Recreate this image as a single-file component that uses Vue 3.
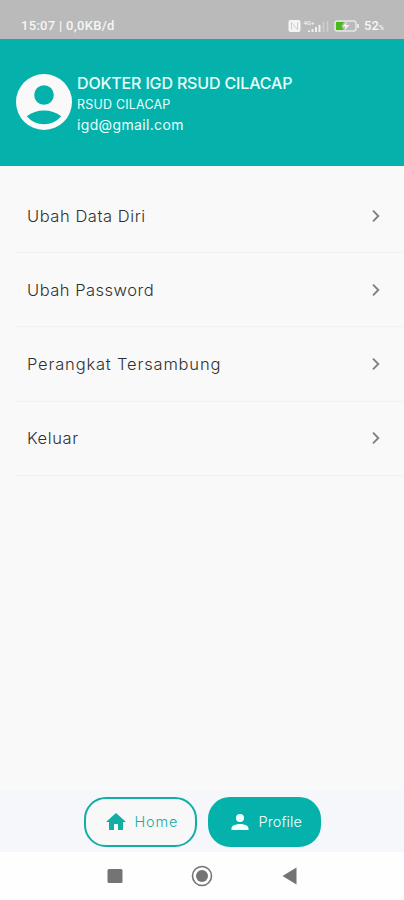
<template>
  <div class="screen">
    <div class="status-bar">
      <span class="status-time">15:07 | 0,0KB/d</span>
      <div class="status-icons">
        <svg width="42" height="14" viewBox="0 0 42 14">
          <rect x="0.5" y="1" width="12" height="12" rx="2" fill="#f4f4f4" />
          <path d="M3.5 10.5v-7l6 7v-7" fill="none" stroke="#cfcfcf" stroke-width="1" />
          <text x="15.5" y="6" class="network">4G+</text>
          <path d="M21 13v-1.5M24.5 13v-3M28 13V8M31.5 13V6" stroke="#f0f0f0" stroke-width="2" />
          <path d="M35.5 13V3M39.5 13V2" stroke="#d0d0d0" stroke-width="1.5" />
        </svg>
        <svg class="battery" width="26" height="12" viewBox="0 0 26 12">
          <rect x="1" y="1" width="21" height="10" rx="2.5" fill="none" stroke="#e6e6e6" stroke-width="1.5" />
          <path d="M2 2h8L7.5 6l2 4H2z" fill="#48b91b" />
          <path d="M13 1.5L8.5 6.5h3l-1 4 5-5.5H12z" fill="#f4f4f4" />
          <path d="M24 4v4" stroke="#e6e6e6" stroke-width="2" />
        </svg>
        <span class="percent">52<small>%</small></span>
      </div>
    </div>

    <header class="header">
      <svg class="avatar" width="56" height="56" viewBox="2 2 20 20">
        <circle cx="12" cy="12" r="10" fill="#f9f9f9" />
        <circle cx="12" cy="9.5" r="3.5" fill="#04b2ab" />
        <path d="M5.85 17.1C7.6 15.7 9.7 15 12 15s4.4.7 6.15 2.1A8 8 0 0 1 5.85 17.1z" fill="#04b2ab" />
      </svg>
      <div class="user">
        <div class="user-name">DOKTER IGD RSUD CILACAP</div>
        <div class="user-place">RSUD CILACAP</div>
        <div class="user-email">igd@gmail.com</div>
      </div>
    </header>

    <main class="menu">
      <div v-for="item in menu" :key="item.key" class="menu-item" :class="item.key">
        <span>{{ item.label }}</span>
        <svg width="10" height="14" viewBox="0 0 10 14">
          <path d="M2 1.7L7.3 7 2 12.3" fill="none" stroke="#808080" stroke-width="1.9" />
        </svg>
      </div>
    </main>

    <nav class="tabs">
      <button class="tab" :class="{ active: tab === 'home' }" @click="tab = 'home'">
        <svg width="24" height="24" viewBox="0 0 24 24">
          <path d="M10 20v-6h4v6h5v-8h3L12 3 2 12h3v8z" fill="currentColor" />
        </svg>
        <span class="home-label">Home</span>
      </button>
      <button class="tab" :class="{ active: tab === 'profile' }" @click="tab = 'profile'">
        <svg width="24" height="24" viewBox="0 0 24 24">
          <path d="M12 12a4 4 0 1 0 0-8 4 4 0 0 0 0 8zm0 2c-3 0-8.5 1.3-8.5 4.2V20h17v-1.8C20.5 15.3 15 14 12 14z" fill="currentColor" />
        </svg>
        <span class="profile-label">Profile</span>
      </button>
    </nav>

    <div class="system-nav">
      <svg width="22" height="22" viewBox="0 0 22 22">
        <rect x="3.5" y="4" width="15" height="14" rx="1.5" fill="#747474" />
      </svg>
      <svg width="22" height="22" viewBox="0 0 22 22">
        <circle cx="11" cy="11" r="9.5" fill="none" stroke="#747474" stroke-width="1.6" />
        <circle cx="11" cy="11" r="6" fill="#747474" />
      </svg>
      <svg width="22" height="22" viewBox="0 0 22 22">
        <path d="M3.5 11L17.5 2.5v17z" fill="#747474" />
      </svg>
    </div>
  </div>
</template>

<script setup>
import { ref } from 'vue';

const tab = ref('profile');

const menu = [
  { key: 'data-diri', label: 'Ubah Data Diri' },
  { key: 'password', label: 'Ubah Password' },
  { key: 'perangkat', label: 'Perangkat Tersambung' },
  { key: 'keluar', label: 'Keluar' },
];
</script>

<style>
body {
  margin: 0;
}
</style>

<style scoped>
.screen {
  display: flex;
  flex-direction: column;
  height: 900px;
  background: #f9f9f9;
  font-family: Inter, sans-serif;
  overflow: hidden;
}

.screen svg {
  flex: none;
}

.status-bar {
  display: flex;
  justify-content: space-between;
  box-sizing: border-box;
  height: 39px;
  padding: 18px 20px 0 21px;
  background: #bababa;
  color: #f6f6f6;
  font-family: Roboto, sans-serif;
  font-size: 13px;
  font-weight: 500;
  line-height: 16px;
  white-space: nowrap;
}

.status-time {
  letter-spacing: 0.3px;
}

.status-icons {
  display: flex;
  align-items: center;
  height: 16px;
}

.network {
  fill: #f4f4f4;
  font-size: 6px;
}

.battery {
  margin: 0 4px 0 4px;
}

.percent {
  padding-top: 1px;
}

.percent small {
  font-size: 7px;
}

.header {
  display: flex;
  align-items: flex-start;
  box-sizing: border-box;
  height: 127px;
  padding: 35px 16px 0;
  background: #04b2ab;
  color: #e9fffc;
}

.user {
  margin-left: 5px;
  white-space: nowrap;
}

.user-name {
  height: 20px;
  font-size: 16px;
  font-weight: 500;
  line-height: 19px;
  letter-spacing: -0.16px;
}

.user-place {
  height: 20px;
  font-size: 12.5px;
  line-height: 22px;
  letter-spacing: 0.2px;
}

.user-email {
  font-size: 14px;
  line-height: 21px;
  letter-spacing: 0.35px;
}

.menu {
  flex: 1;
  padding-top: 13px;
}

.menu-item {
  display: flex;
  align-items: center;
  justify-content: space-between;
  box-sizing: border-box;
  height: 74.2px;
  margin-left: 15px;
  padding: 0 23px 0 12px;
  border-bottom: 1px solid #f1f1f1;
  color: #303030;
  font-size: 16.5px;
  font-weight: 300;
}

.data-diri {
  letter-spacing: 0.55px;
}

.password {
  letter-spacing: 0.5px;
}

.perangkat {
  letter-spacing: 0.82px;
}

.keluar {
  letter-spacing: 0.6px;
}

.tabs {
  display: flex;
  justify-content: center;
  gap: 11px;
  box-sizing: border-box;
  height: 62px;
  padding: 7px 0 5px;
  background: #f5f7fa;
}

.tab {
  display: flex;
  align-items: center;
  gap: 7px;
  box-sizing: border-box;
  width: 113px;
  height: 50px;
  padding: 0 0 1px 18px;
  border: 2px solid #10aea5;
  border-radius: 22px;
  background: #f8f8f8;
  color: #10aea5;
  font-family: inherit;
  font-size: 14.5px;
  font-weight: 300;
  cursor: pointer;
}

.tab.active {
  background: #04b2ab;
  border-color: #04b2ab;
  color: #f4ffff;
}

.home-label {
  letter-spacing: 0.8px;
}

.profile-label {
  letter-spacing: 0.1px;
}

.system-nav {
  display: flex;
  justify-content: center;
  gap: 65.5px;
  box-sizing: border-box;
  height: 48px;
  padding-top: 13px;
  background: #fefefe;
}
</style>
